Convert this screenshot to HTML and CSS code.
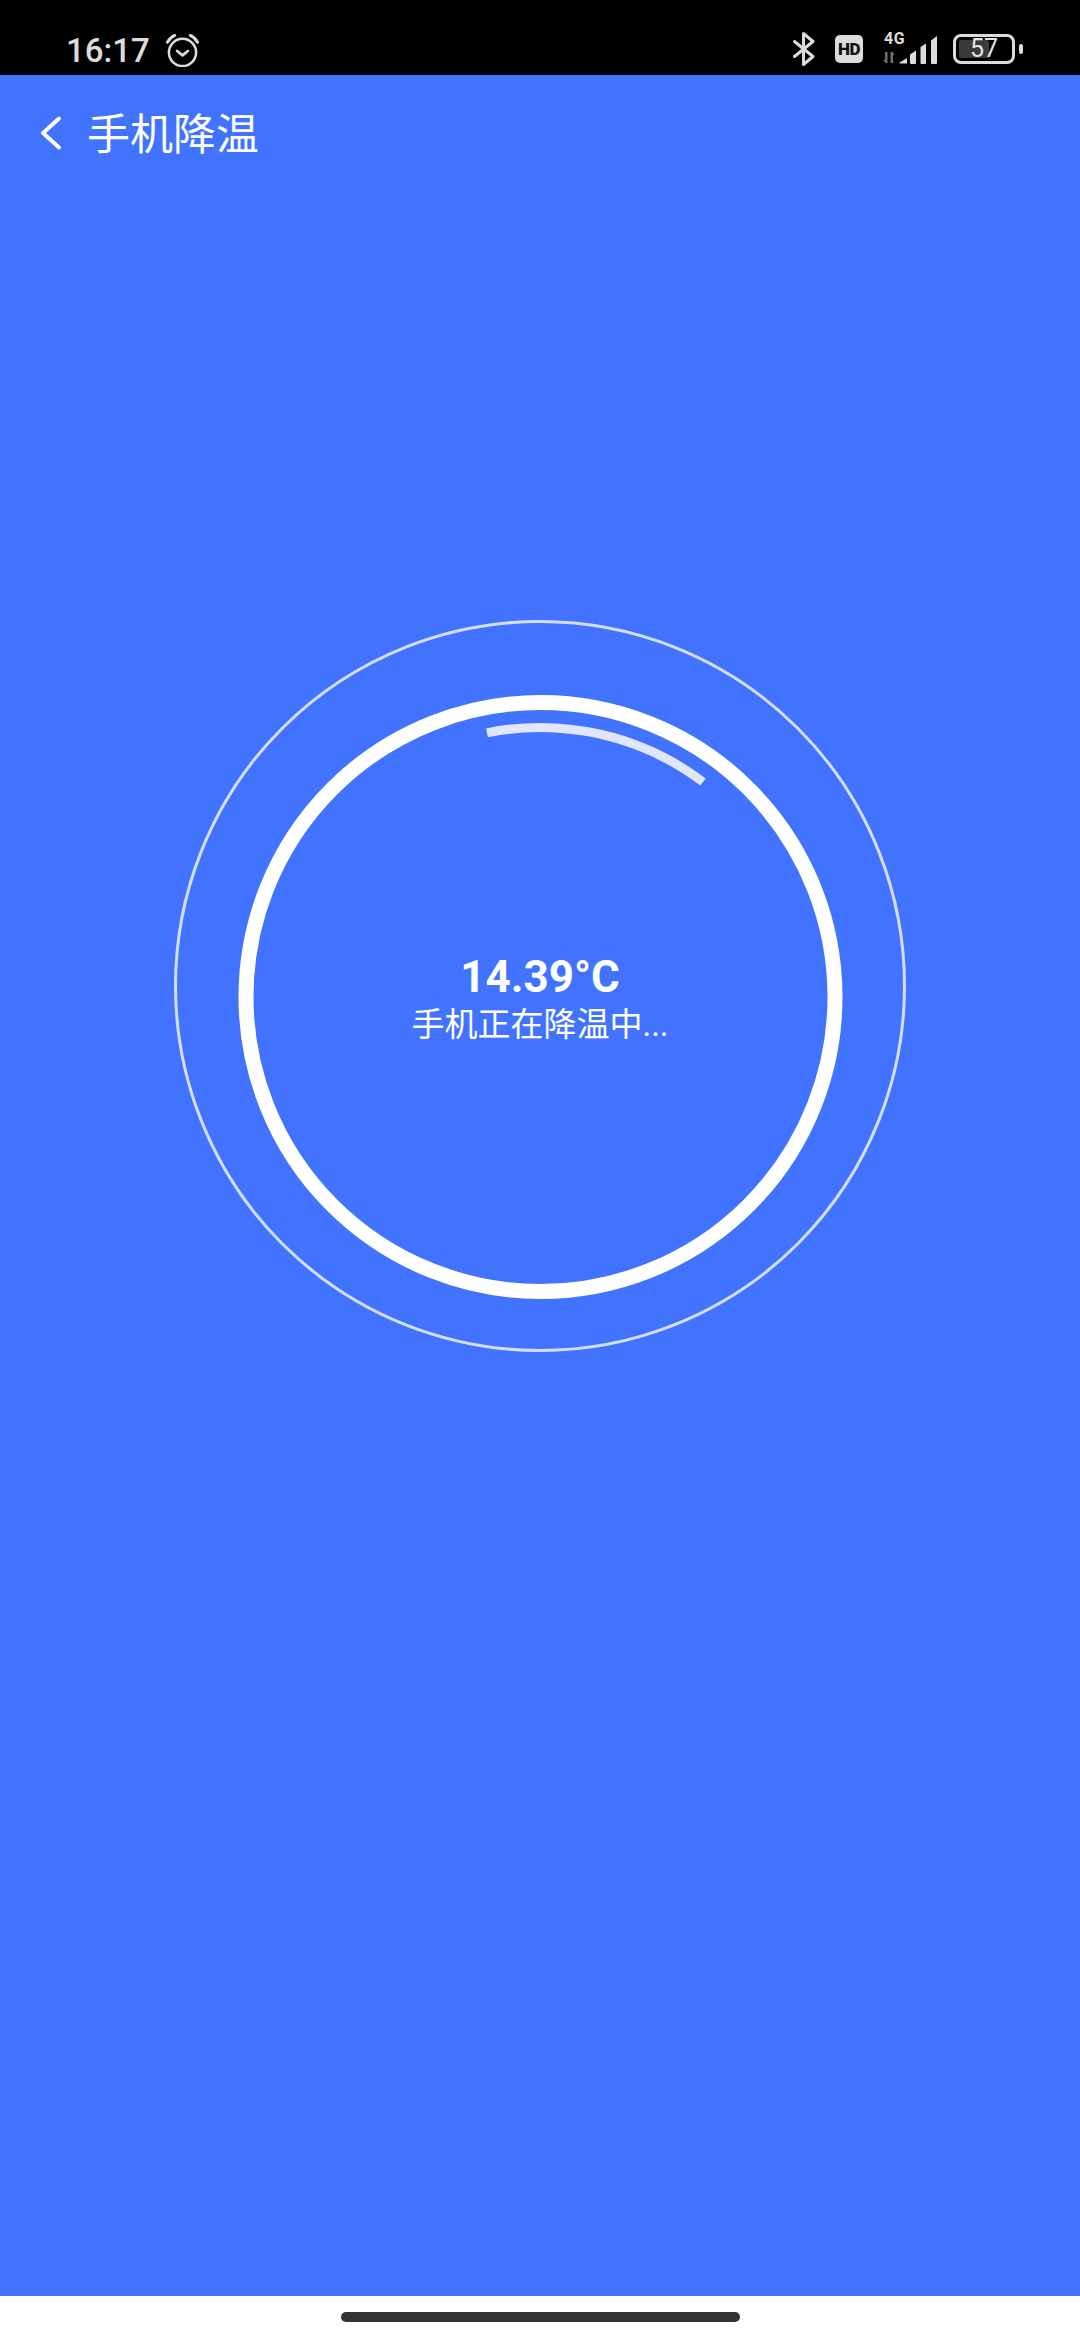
FILE: index.html
```html
<!DOCTYPE html>
<html lang="zh">
<head>
<meta charset="utf-8">
<title>手机降温</title>
<link rel="stylesheet" href="styles.css">
</head>
<body>
<div class="page">
  <header class="status">
    <div class="status-left">
      <span class="time">16:17</span>
      <svg class="alarm" width="35" height="34" viewBox="0 0 36 35" fill="none" stroke="#dcdcdc" stroke-linecap="round" stroke-linejoin="round">
        <circle cx="18" cy="20" r="14" stroke-width="2.6"/>
        <path d="M12.500 18.500l5.500 4.500 5.500-4.500" stroke-width="2.800"/>
        <path d="M2.500 9.500C4.500 6 7 3.800 10 2.500M33.500 9.500C31.500 6 29 3.800 26 2.500" stroke-width="3"/>
      </svg>
    </div>
    <div class="status-right">
      <svg class="bt" width="22" height="34" viewBox="0 0 22 34" fill="none" stroke="#dcdcdc" stroke-width="3" stroke-linejoin="round" stroke-linecap="round">
        <path d="M1.500 9.500L20 24.500L10.500 32.500V1.500L20 9.500L1.500 24.500"/>
      </svg>
      <span class="hd">HD</span>
      <div class="net">
        <span class="four-g">4G</span>
        <svg class="arrows" width="12" height="13" viewBox="0 0 12 13" fill="#6f6f6f">
          <rect x="2" y="1" width="2.500" height="11"/>
          <rect x="7.500" y="1" width="2.500" height="11"/>
          <path d="M0 9l3 3V9zM12 4L9 1v3z"/>
        </svg>
        <svg class="bars" width="40" height="29" viewBox="0 0 40 29" fill="#dcdcdc">
          <path d="M0 28L8 23V28.500H1zM11 19.500L17 15.500V28a1 1 0 0 1-1 1H12a1 1 0 0 1-1-1zM21.500 12L27 8.500V28a1 1 0 0 1-1 1H22.500a1 1 0 0 1-1-1zM32 5.500L38 1V28a1 1 0 0 1-1 1H33a1 1 0 0 1-1-1z"/>
        </svg>
      </div>
      <div class="battery">
        <div class="battery-body">
          <span class="battery-fill"></span>
          <span class="battery-text">57</span>
        </div>
        <span class="battery-tip"></span>
      </div>
    </div>
  </header>

  <main class="main">
    <div class="appbar">
      <svg class="back" width="22" height="34" viewBox="0 0 22 34" fill="none" stroke="#fff" stroke-width="3.800" stroke-linecap="round" stroke-linejoin="round">
        <path d="M19 2.500L3 17L19 31.500"/>
      </svg>
      <h1 class="title">手机降温</h1>
    </div>
    <div class="stage">
      <svg class="rings" width="732" height="732" viewBox="0 0 732 732" fill="none">
        <circle cx="366" cy="366" r="364.500" stroke="#d3deff" stroke-width="3"/>
        <circle cx="366.500" cy="377" r="294.500" stroke="#fff" stroke-width="15"/>
        <path d="M313 112.800A269.500 269.500 0 0 1 529 162" stroke="#e0e6fb" stroke-width="9"/>
      </svg>
      <div class="readout">
        <div class="temp">14.39°C</div>
        <div class="caption">手机正在降温中...</div>
      </div>
    </div>
  </main>

  <footer class="navbar"><span class="pill"></span></footer>
</div>
</body>
</html>
```
FILE: styles.css
```css
* { box-sizing: border-box; }
html, body { margin: 0; padding: 0; }
body { background: #fff; font-family: Roboto, "Noto Sans CJK SC", sans-serif; }

.page { width: 1080px; height: 2340px; display: flex; flex-direction: column; overflow: hidden; }

.status {
  height: 75px; flex: none; background: #000; color: #dcdcdc;
  display: flex; justify-content: space-between; align-items: flex-start;
  padding: 32px 57px 0 66px;
}
.status-left { display: flex; align-items: center; gap: 15px; }
.time { font-size: 33px; line-height: 35px; font-weight: 500; padding-top: 1px; }
.alarm { display: block; }
.status-right { display: flex; align-items: center; height: 34px; }
.bt { display: block; margin-right: 20px; }
.hd {
  width: 28px; height: 28px; border-radius: 5px; background: #dcdcdc; color: #111;
  font-size: 17px; line-height: 28px; font-weight: 900; text-align: center; letter-spacing: -0.5px;
  margin-right: 20px;
}
.net { position: relative; width: 56px; height: 34px; margin-right: 14px; }
.four-g { position: absolute; left: 1px; top: -1px; font-size: 16px; line-height: 15px; font-weight: 700; letter-spacing: 0.5px; }
.arrows { position: absolute; left: 0; top: 19px; }
.bars { position: absolute; left: 16px; top: 3px; }
.battery { display: flex; align-items: center; gap: 4px; }
.battery-body {
  position: relative; width: 62px; height: 30px; border: 3.500px solid #dcdcdc; border-radius: 8px;
}
.battery-fill { position: absolute; left: 3px; top: 3px; bottom: 3px; width: 30px; background: #3a3a3a; border-radius: 2px; }
.battery-text { position: absolute; inset: 0; text-align: center; font-size: 25px; line-height: 24px; color: #e6e6e6; }
.battery-tip { width: 4px; height: 10px; background: #dcdcdc; border-radius: 2px; }

.main { flex: 1; background: #4173ff; display: flex; flex-direction: column; }
.appbar { height: 112px; display: flex; align-items: center; padding-left: 40px; gap: 25px; color: #fff; }
.back { display: block; margin-top: 3px; }
.title { margin: 0; font-size: 43px; line-height: 60px; font-weight: 400; font-family: "Noto Sans CJK SC", sans-serif; }

.stage { margin-top: 433px; display: grid; justify-content: center; color: #fff; }
.rings { grid-area: 1 / 1; display: block; }
.readout { grid-area: 1 / 1; text-align: center; padding-top: 330px; }
.temp { font-size: 44px; line-height: 54px; font-weight: 700; }
.caption { font-size: 33px; line-height: 42px; margin-top: 0; }

.navbar { height: 44px; flex: none; background: #fff; display: flex; justify-content: center; padding-top: 16px; }
.pill { width: 399px; height: 10px; border-radius: 5px; background: #333; }
```
